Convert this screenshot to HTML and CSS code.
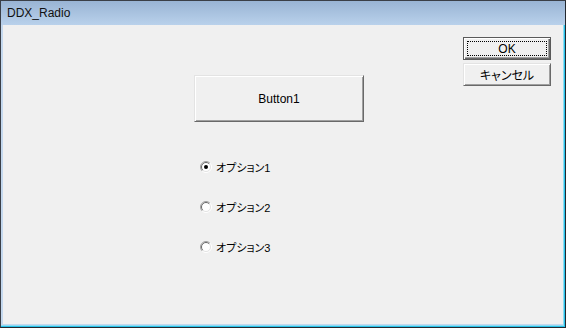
FILE: index.html
```html
<!DOCTYPE html>
<html lang="ja">
<head>
    <meta charset="UTF-8">
    <title>DDX_Radio</title>
    <link rel="stylesheet" href="styles.css">
</head>
<body>
    <div class="window">
        <div class="titlebar">DDX_Radio</div>
        <div class="frame">
            <div class="client">
                <div class="main-col">
                    <div class="btn big">Button1</div>
                    <div class="radio-group">
                        <div class="radio-row">
                            <svg class="radio" width="12" height="12" viewBox="0 0 12 12">
                                <circle cx="6" cy="6" r="5" fill="#fff"/>
                                <path d="M9.9 2.1 A5.5 5.5 0 0 0 2.1 9.9" stroke="#a0a0a0" fill="none"/>
                                <path d="M2.1 9.9 A5.5 5.5 0 0 0 9.9 2.1" stroke="#ffffff" fill="none"/>
                                <path d="M9.2 2.8 A4.5 4.5 0 0 0 2.8 9.2" stroke="#696969" fill="none"/>
                                <path d="M2.8 9.2 A4.5 4.5 0 0 0 9.2 2.8" stroke="#e3e3e3" fill="none"/>
                                <circle cx="6" cy="6" r="2" fill="#000"/>
                            </svg>
                            <span class="label">オプション1</span>
                        </div>
                        <div class="radio-row">
                            <svg class="radio" width="12" height="12" viewBox="0 0 12 12">
                                <circle cx="6" cy="6" r="5" fill="#fff"/>
                                <path d="M9.9 2.1 A5.5 5.5 0 0 0 2.1 9.9" stroke="#a0a0a0" fill="none"/>
                                <path d="M2.1 9.9 A5.5 5.5 0 0 0 9.9 2.1" stroke="#ffffff" fill="none"/>
                                <path d="M9.2 2.8 A4.5 4.5 0 0 0 2.8 9.2" stroke="#696969" fill="none"/>
                                <path d="M2.8 9.2 A4.5 4.5 0 0 0 9.2 2.8" stroke="#e3e3e3" fill="none"/>
                            </svg>
                            <span class="label">オプション2</span>
                        </div>
                        <div class="radio-row">
                            <svg class="radio" width="12" height="12" viewBox="0 0 12 12">
                                <circle cx="6" cy="6" r="5" fill="#fff"/>
                                <path d="M9.9 2.1 A5.5 5.5 0 0 0 2.1 9.9" stroke="#a0a0a0" fill="none"/>
                                <path d="M2.1 9.9 A5.5 5.5 0 0 0 9.9 2.1" stroke="#ffffff" fill="none"/>
                                <path d="M9.2 2.8 A4.5 4.5 0 0 0 2.8 9.2" stroke="#696969" fill="none"/>
                                <path d="M2.8 9.2 A4.5 4.5 0 0 0 9.2 2.8" stroke="#e3e3e3" fill="none"/>
                            </svg>
                            <span class="label">オプション3</span>
                        </div>
                    </div>
                </div>
                <div class="side-col">
                    <div class="btn default"><span class="focus">OK</span></div>
                    <div class="btn">キャンセル</div>
                </div>
            </div>
        </div>
    </div>
</body>
</html>
```

FILE: styles.css
```css
html, body {
    margin: 0;
    padding: 0;
}
body {
    width: 566px;
    height: 328px;
    overflow: hidden;
    font-family: "Liberation Sans", "Noto Sans CJK JP", sans-serif;
    color: #000;
}
.window {
    width: 566px;
    height: 328px;
    box-sizing: border-box;
    border: 1px solid #3a3f47;
    border-right-color: #24292f;
    border-bottom-color: #24292f;
    display: flex;
    flex-direction: column;
    background: #c4d8ee;
}
.titlebar {
    height: 24px;
    line-height: 25px;
    padding-left: 6px;
    font-size: 12px;
    color: #111;
    background: linear-gradient(to bottom, #99b4d4, #b9d1eb);
}
.frame {
    flex: 1;
    display: flex;
    padding: 0 2px 3px 2px;
    box-shadow: inset -1px -1px 0 #28c2ea, inset -2px -2px 0 #8fdcf2;
}
.client {
    flex: 1;
    display: flex;
    background: #f0f0f0;
    font-size: 12px;
}
.main-col {
    margin-left: 191px;
    padding-top: 50px;
    width: 170px;
    display: flex;
    flex-direction: column;
}
.side-col {
    margin-left: 99px;
    padding-top: 12px;
    display: flex;
    flex-direction: column;
    gap: 3px;
}
.btn {
    box-sizing: border-box;
    width: 88px;
    height: 23px;
    display: flex;
    align-items: center;
    justify-content: center;
    background: #f0f0f0;
    border: 1px solid;
    border-color: #e3e3e3 #696969 #696969 #e3e3e3;
    box-shadow: inset 1px 1px 0 #fff, inset -1px -1px 0 #a0a0a0;
    font-size: 12px;
    font-feature-settings: "palt";
}
.btn.big {
    width: 170px;
    height: 47px;
    font-size: 12px;
}
.btn.default {
    border: 1px solid #5a5a5a;
    box-shadow: inset 1px 1px 0 #fff, inset -1px -1px 0 #696969, inset -2px -2px 0 #a0a0a0;
    padding: 3px;
}
.focus {
    flex: 1;
    align-self: stretch;
    display: flex;
    align-items: center;
    justify-content: center;
    border: 1px dotted #000;
    font-size: 12px;
}
.radio-group {
    margin-top: 37px;
    margin-left: 6px;
    display: flex;
    flex-direction: column;
    gap: 24px;
}
.radio-row {
    height: 16px;
    display: flex;
    align-items: center;
    gap: 4px;
}
.radio {
    display: block;
    flex: none;
}
.label {
    font-size: 11px;
    font-feature-settings: "palt";
}
```
